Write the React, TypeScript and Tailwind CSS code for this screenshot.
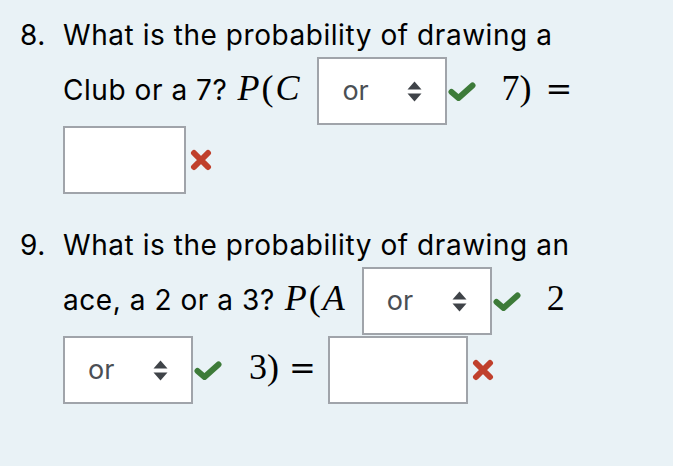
import React from 'react'

const sans = "font-['Inter','Liberation_Sans',sans-serif] text-[28px] leading-[34px] tracking-[0.55px] text-black"
const serif = "font-['Liberation_Serif','DejaVu_Serif',serif] text-[36px] leading-[34px] text-black"
const eq = "font-['DejaVu_Serif','Liberation_Serif',serif] text-[32px] leading-[34px] text-black"

function Arrows() {
  return (
    <svg width="15" height="21" viewBox="0 0 15 21" className="shrink-0">
      <path d="M0.5 8.5 L7.5 0.5 L14.5 8.5 Z" fill="#3f4348" />
      <path d="M0.5 12.5 L7.5 20.5 L14.5 12.5 Z" fill="#3f4348" />
    </svg>
  )
}

function Check() {
  return (
    <svg width="28" height="19" viewBox="0 0 28 19" className="self-center shrink-0 ml-[1px]">
      <path d="M3.5 10 L10.5 16 L24.5 3.5" fill="none" stroke="#3d7b39" strokeWidth="6" strokeLinecap="round" strokeLinejoin="round" />
    </svg>
  )
}

function Cross() {
  return (
    <svg width="22" height="22" viewBox="0 0 22 22" className="self-center shrink-0 ml-[4px]">
      <path d="M4 4 L18 18 M18 4 L4 18" fill="none" stroke="#c0402c" strokeWidth="6" strokeLinecap="round" />
    </svg>
  )
}

function Select({ className = '' }: { className?: string }) {
  return (
    <div className={`w-[130px] h-[68px] shrink-0 bg-white border-2 border-[#a0a4aa] flex items-center justify-between pl-[23px] pr-[23px] ${className}`}>
      <span className="font-['Inter','Liberation_Sans',sans-serif] text-[27px] leading-[34px] text-[#4b4f54]">or</span>
      <Arrows />
    </div>
  )
}

function Input({ w, className = '' }: { w: string; className?: string }) {
  return <div className={`${w} h-[68px] shrink-0 bg-white border-2 border-[#a0a4aa] ${className}`} />
}

function Question({ n, children }: { n: string; children: React.ReactNode }) {
  return (
    <div className="flex">
      <div className={`w-[63px] pl-[20px] pt-[18px] ${sans}`}>{n}</div>
      <div className="flex flex-col">{children}</div>
    </div>
  )
}

function PVar({ v }: { v: string }) {
  return (
    <span className={`${serif} tracking-[2px]`}>
      <i>P</i>(<i>{v}</i>
    </span>
  )
}

export default function App() {
  return (
    <div className="w-[689px] h-[466px] bg-white">
      <div className="w-[673px] h-full bg-[#e9f2f6]">
        <Question n="8.">
          <div className={`h-[57px] pt-[18px] ${sans}`}>What is the probability of drawing a</div>
          <div className="flex items-baseline h-[68px]">
            <span className={sans}>Club or a 7?</span>
            <span className="ml-[10px]">
              <PVar v="C" />
            </span>
            <Select className="ml-[16px]" />
            <Check />
            <span className={`${serif} ml-[25px]`}>7)</span>
            <span className={`${eq} ml-[14px]`}>=</span>
          </div>
          <div className="flex items-center mt-[1px]">
            <Input w="w-[123px]" />
            <Cross />
          </div>
        </Question>
        <div className="mt-[16px]">
          <Question n="9.">
            <div className={`h-[57px] pt-[18px] ${sans}`}>What is the probability of drawing an</div>
            <div className="flex items-baseline h-[68px]">
              <span className={sans}>ace, a 2 or a 3?</span>
              <span className="ml-[10px]">
                <PVar v="A" />
              </span>
              <Select className="ml-[15px]" />
              <Check />
              <span className={`${serif} ml-[26px]`}>2</span>
            </div>
            <div className="flex items-baseline h-[68px] mt-[1px]">
              <Select />
              <Check />
              <span className={`${serif} ml-[27px]`}>3)</span>
              <span className={`${eq} ml-[10px]`}>=</span>
              <Input w="w-[140px]" className="ml-[12px] self-center" />
              <Cross />
            </div>
          </Question>
        </div>
      </div>
    </div>
  )
}
